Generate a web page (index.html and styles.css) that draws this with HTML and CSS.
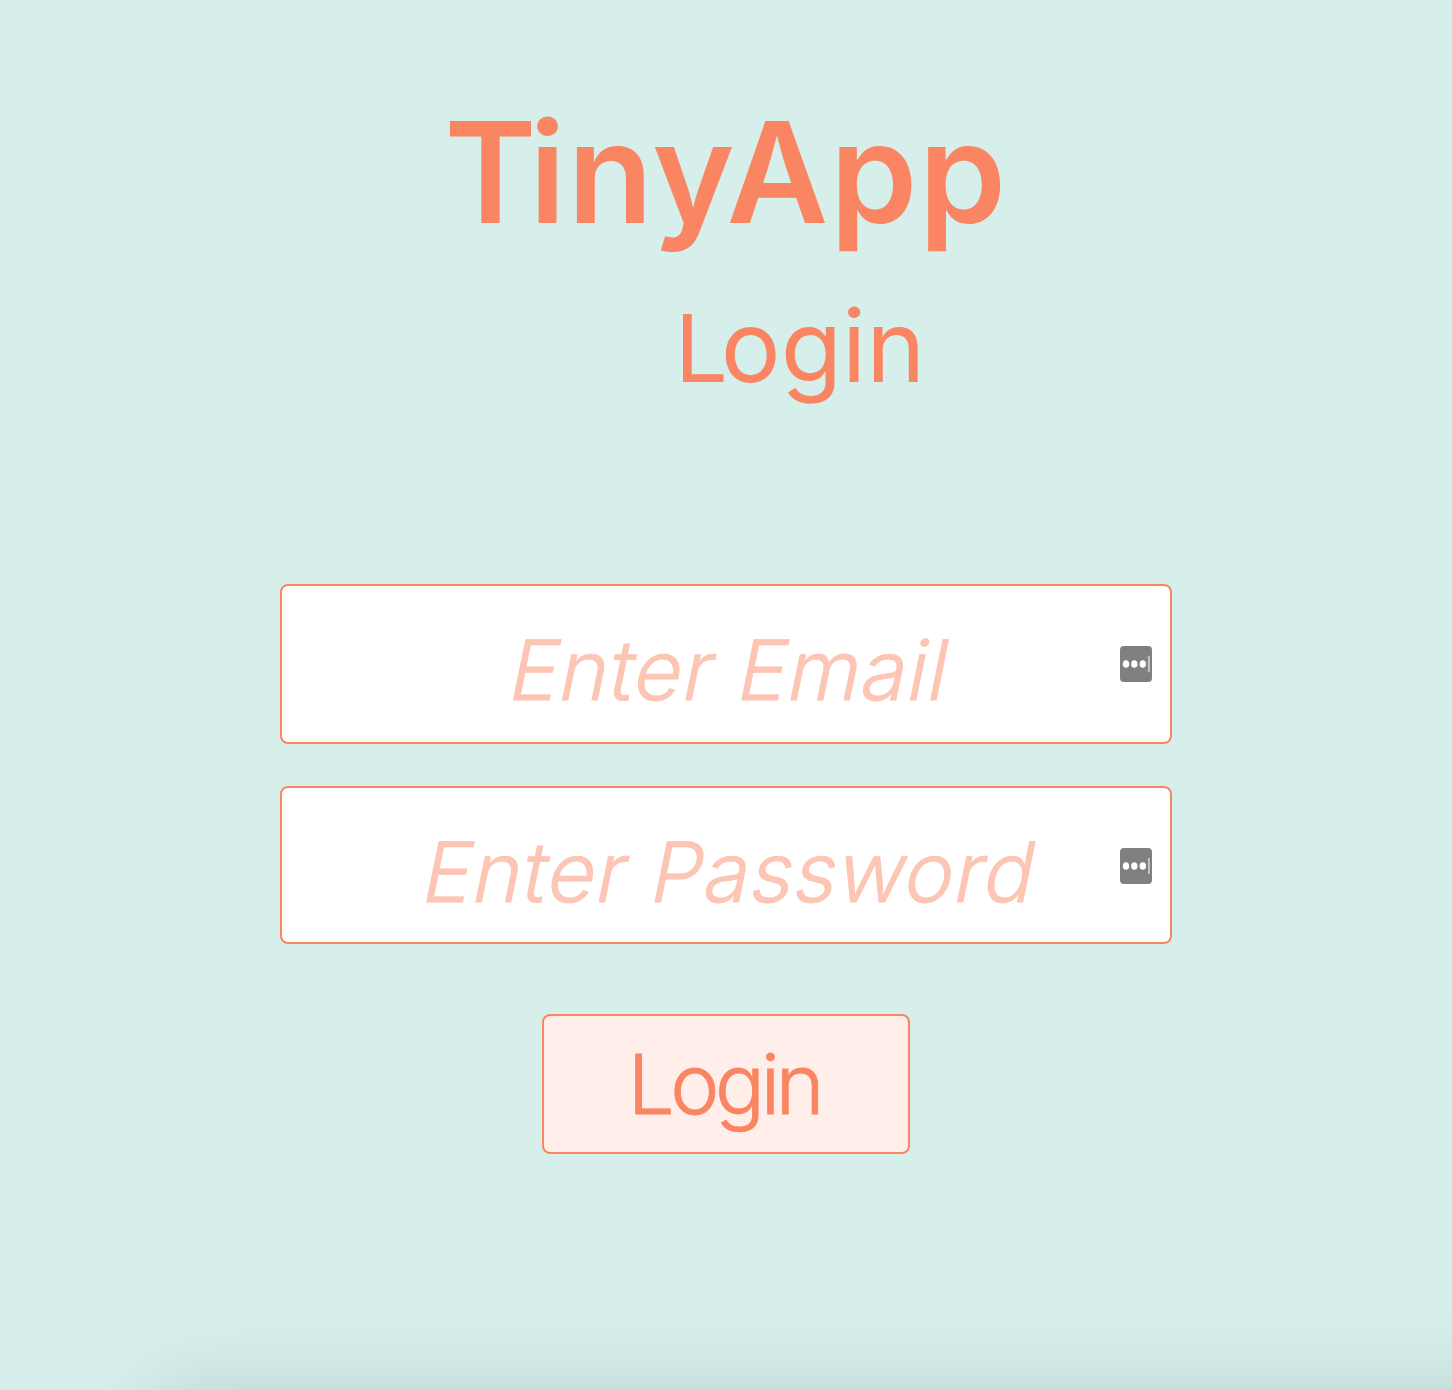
FILE: index.html
```html
<!DOCTYPE html>
<html lang="en">
<head>
<meta charset="utf-8">
<title>TinyApp</title>
<link rel="stylesheet" href="styles.css">
</head>
<body>
<main class="page">
  <h1 class="title">TinyApp</h1>
  <h2 class="subtitle">Login</h2>
  <form class="form">
    <div class="field">
      <input class="input" type="email" placeholder="Enter Email" aria-label="Email">
      <svg class="manager" viewBox="0 0 32 36"><rect width="32" height="36" rx="4" fill="#808080"/><g fill="#fff"><ellipse cx="6" cy="18" rx="3.2" ry="3.8"/><ellipse cx="14.3" cy="18" rx="3.2" ry="3.8"/><ellipse cx="22.8" cy="18" rx="3.2" ry="3.8"/><rect x="28.2" y="10" width="1.5" height="16" fill="#d8d8d8"/></g></svg>
    </div>
    <div class="field field-password">
      <input class="input" type="password" placeholder="Enter Password" aria-label="Password">
      <svg class="manager" viewBox="0 0 32 36"><rect width="32" height="36" rx="4" fill="#808080"/><g fill="#fff"><ellipse cx="6" cy="18" rx="3.2" ry="3.8"/><ellipse cx="14.3" cy="18" rx="3.2" ry="3.8"/><ellipse cx="22.8" cy="18" rx="3.2" ry="3.8"/><rect x="28.2" y="10" width="1.5" height="16" fill="#d8d8d8"/></g></svg>
    </div>
    <button class="submit" type="button">Login</button>
  </form>
  <div class="shade"></div>
</main>
</body>
</html>
```
FILE: styles.css
```css
* { box-sizing: border-box; }
body { margin: 0; }
.page {
  position: relative;
  height: 1390px;
  overflow: hidden;
  background: #d6efeb;
  color: #fa8562;
  font-family: Inter, "Liberation Sans", sans-serif;
  display: flex;
  flex-direction: column;
  align-items: center;
}
.title {
  margin: 87px 0 0;
  font-size: 140px;
  line-height: 170px;
  font-weight: 600;
  letter-spacing: 1.5px;
  white-space: nowrap;
}
.title::first-letter { margin-right: -9px; }
.subtitle {
  margin: 31px 0 0;
  padding-left: 148px;
  font-size: 100px;
  line-height: 116px;
  font-weight: 400;
}
.subtitle::first-letter { font-size: 94px; margin-right: -7px; }
.form {
  width: 892px;
  margin-top: 178px;
  display: flex;
  flex-direction: column;
  align-items: center;
}
.field {
  position: relative;
  width: 100%;
  height: 160px;
  margin-bottom: 42px;
  border: 2px solid #fa8562;
  border-radius: 8px;
  background: #fff;
}
.field-password { height: 158px; }
.input {
  display: block;
  width: 100%;
  height: 156px;
  padding: 12px 0 0 12px;
  border: 0;
  outline: 0;
  background: transparent;
  color: #fa8562;
  font: 300 83px/100px Inter, "Liberation Sans", sans-serif;
  letter-spacing: 0.8px;
  -webkit-text-stroke: 0.9px #fcc5b4;
  text-align: center;
  transform: skewX(-11.5deg);
}
.input::placeholder { color: #fcc5b4; opacity: 1; }
.manager {
  position: absolute;
  right: 18px;
  top: 60px;
  width: 32px;
  height: 36px;
}
.submit {
  width: 368px;
  height: 140px;
  margin-top: 28px;
  padding: 0;
  border: 2px solid #fa8562;
  border-radius: 8px;
  background: #ffeeea;
  color: #fa8562;
  font: 300 83px/100px Inter, "Liberation Sans", sans-serif;
  letter-spacing: -4.4px;
  text-indent: -4px;
  -webkit-text-stroke: 0.9px #fa8562;
}
.shade {
  position: absolute;
  left: 158px;
  right: -150px;
  top: 1398px;
  height: 300px;
  box-shadow: 0 0 86px rgba(0, 0, 0, 0.15);
}
```
